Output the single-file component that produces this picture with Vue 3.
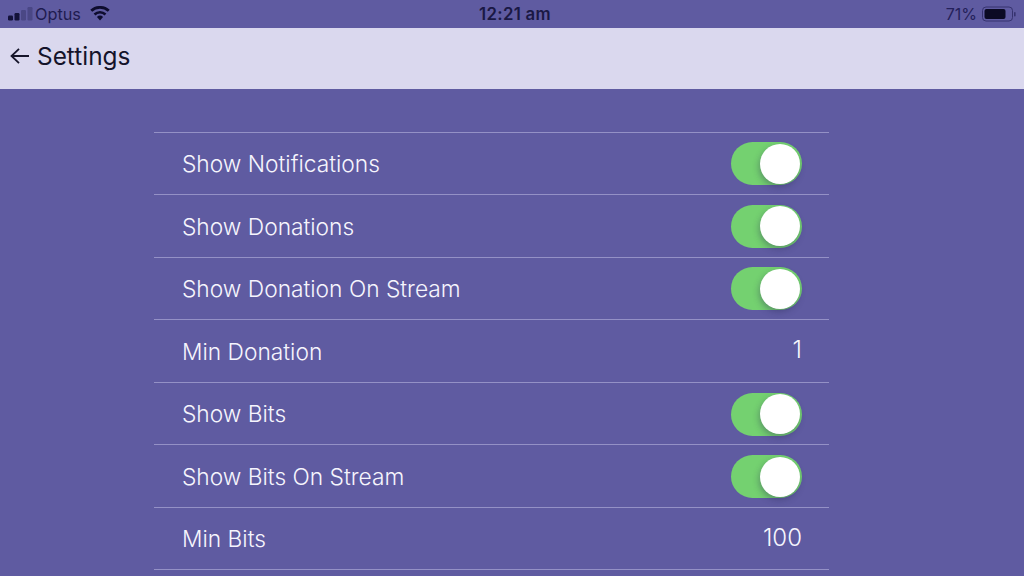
<script setup>
const rows = [
  { label: 'Show Notifications', on: true },
  { label: 'Show Donations', on: true },
  { label: 'Show Donation On Stream', on: true },
  { label: 'Min Donation', value: '1' },
  { label: 'Show Bits', on: true },
  { label: 'Show Bits On Stream', on: true },
  { label: 'Min Bits', value: '100' },
]
</script>

<template>
  <div class="page">
    <div class="status">
      <div class="st-left">
        <svg class="signal" width="25" height="14" viewBox="0 0 25 14">
          <rect x="0" y="8.5" width="5" height="5" rx="1.2" fill="#14123a" />
          <rect x="6.5" y="6" width="5" height="7.5" rx="1.2" fill="#14123a" />
          <rect x="13" y="3" width="5" height="10.5" rx="1.2" fill="#4a4785" />
          <rect x="19.5" y="0" width="5" height="13.5" rx="1.2" fill="#4a4785" />
        </svg>
        <span class="carrier">Optus</span>
        <svg class="wifi" width="20" height="15" viewBox="0 0 20 15">
          <path d="M10 14.5 L6.9 11 A4.6 4.6 0 0 1 13.1 11 Z" fill="#0e0c2e" />
          <path d="M5.4 9.4 L3.6 7.4 A9.4 9.4 0 0 1 16.4 7.4 L14.6 9.4 A6.8 6.8 0 0 0 5.4 9.4 Z" fill="#0e0c2e" />
          <path d="M2.2 5.8 L0.3 3.8 A14.2 14.2 0 0 1 19.7 3.8 L17.8 5.8 A11.5 11.5 0 0 0 2.2 5.8 Z" fill="#0e0c2e" />
        </svg>
      </div>
      <div class="clock">12:21 am</div>
      <div class="st-right">
        <span class="pct">71%</span>
        <svg class="battery" width="35" height="16" viewBox="0 0 35 16">
          <rect x="0.5" y="1" width="30" height="14" rx="3.5" fill="none" stroke="#36336f" stroke-width="1" />
          <rect x="2.5" y="3" width="21" height="10" rx="2" fill="#0b0a24" />
          <rect x="32" y="6" width="1.6" height="4.5" rx="0.8" fill="#36336f" />
        </svg>
      </div>
    </div>
    <header class="bar">
      <svg class="back" width="20" height="18" viewBox="0 0 20 18">
        <path d="M19 9 H1.5 M9 1.8 L1.5 9 L9 16.2" fill="none" stroke="#16152a" stroke-width="1.8" />
      </svg>
      <span class="title">Settings</span>
    </header>
    <main class="content">
      <ul class="list">
        <li v-for="row in rows" :key="row.label" class="row">
          <span class="label">{{ row.label }}</span>
          <span v-if="row.value" class="value">{{ row.value }}</span>
          <span v-else class="toggle"><span class="knob"></span></span>
        </li>
      </ul>
    </main>
  </div>
</template>

<style>
html, body { margin: 0; background: #5f5ba1; overflow: hidden; }
</style>

<style scoped>
.page {
  width: 1024px;
  height: 576px;
  overflow: hidden;
  background: #5f5ba1;
  font-family: Inter, "Liberation Sans", sans-serif;
}
.status {
  height: 28px;
  display: grid;
  grid-template-columns: 1fr auto 1fr;
  align-items: center;
  padding: 0 7px 0 8px;
  color: #16143c;
  font-size: 16px;
}
.st-left { display: flex; align-items: center; }
.signal { margin-right: 2px; }
.carrier { color: #1f1c50; font-size: 16.3px; }
.wifi { margin-left: 9px; margin-top: -1px; }
.clock { font-weight: 600; font-size: 16.8px; letter-spacing: 0.3px; color: #1a1844; margin-left: 5px; }
.st-right { display: flex; align-items: center; justify-content: flex-end; gap: 5px; }
.pct { color: #24215a; }
.bar {
  height: 61px;
  background: #dad8ee;
  display: flex;
  align-items: center;
  padding: 0 0 6px 10px;
  box-sizing: border-box;
}
.back { margin-right: 7px; }
.title { font-size: 24.4px; font-weight: 400; color: #14132a; }
.content { padding: 42.6px 0 0 154px; }
.list {
  width: 675px;
  margin: 0;
  padding: 0;
  list-style: none;
  border-top: 1px solid #9491c6;
}
.row {
  height: 61.55px;
  border-bottom: 1px solid #9491c6;
  padding: 0 27px 0 28px;
  display: flex;
  align-items: center;
  justify-content: space-between;
  color: #f6f5fd;
  font-size: 22.75px;
  font-weight: 300;
}
.label { margin-top: 0.5px; }
.value { margin-top: -3px; font-size: 24px; }
.toggle {
  width: 71px;
  height: 43px;
  margin-top: 1px;
  border-radius: 22px;
  background: #74d170;
  position: relative;
}
.knob {
  position: absolute;
  right: 2px;
  top: 1.5px;
  width: 40px;
  height: 40px;
  border-radius: 50%;
  background: #fff;
  box-shadow: -1px 3px 6px rgba(40, 40, 80, 0.35);
}
</style>
